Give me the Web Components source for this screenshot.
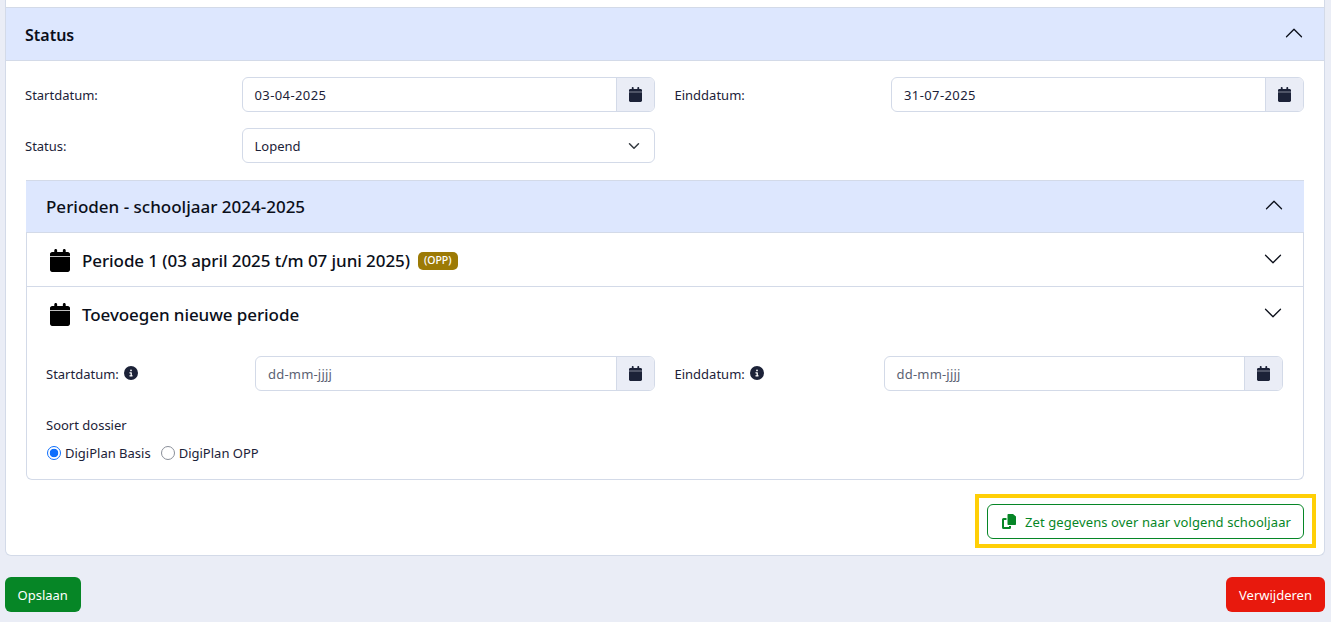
<!DOCTYPE html>
<html lang="nl">
<head>
<meta charset="utf-8">
<title>Status</title>
<style>
    html, body { height: 100%; }
    body {
        margin: 0;
        height: 622px;
        overflow: hidden;
        background: #eaedf6;
        color: #1c2238;
        font: 13px/20px "Noto Sans", "Open Sans", sans-serif;
    }
</style>
</head>
<body>
<template id="cal-icon">
    <svg viewBox="0 0 448 512" width="13" height="15" fill="currentColor"><path d="M96 32V64H48C21.5 64 0 85.500 0 112v48H448V112c0-26.500-21.500-48-48-48H352V32c0-17.700-14.300-32-32-32s-32 14.300-32 32V64H160V32c0-17.700-14.300-32-32-32S96 14.300 96 32zM448 178H0V464c0 26.500 21.500 48 48 48H400c26.500 0 48-21.500 48-48V178z"/></svg>
</template>

<status-page>
    <status-card>
        <accordion-head slot="head" big open>Status</accordion-head>
        <form-row>
            <form-field label="Startdatum:"><date-input value="03-04-2025"></date-input></form-field>
            <form-field label="Einddatum:"><date-input value="31-07-2025"></date-input></form-field>
            <form-field label="Status:"><select-box value="Lopend"></select-box></form-field>
        </form-row>
        <period-section>
            <accordion-head slot="head" open>Perioden - schooljaar 2024-2025</accordion-head>
            <period-row title="Periode 1 (03 april 2025 t/m 07 juni 2025)" badge="(OPP)"></period-row>
            <period-row title="Toevoegen nieuwe periode" open>
                <form-row narrow>
                    <form-field label="Startdatum:" info><date-input placeholder="dd-mm-jjjj"></date-input></form-field>
                    <form-field label="Einddatum:" info><date-input placeholder="dd-mm-jjjj"></date-input></form-field>
                </form-row>
                <radio-group label="Soort dossier" options="DigiPlan Basis|DigiPlan OPP"></radio-group>
            </period-row>
        </period-section>
        <copy-button>Zet gegevens over naar volgend schooljaar</copy-button>
    </status-card>
    <action-bar>
        <action-button kind="save">Opslaan</action-button>
        <action-button kind="delete">Verwijderen</action-button>
    </action-bar>
</status-page>

<script>
const calendarIcon = () => document.getElementById('cal-icon').innerHTML;

function shadow(el, html) {
    el.attachShadow({ mode: 'open' });
    el.shadowRoot.innerHTML = html;
}

class StatusPage extends HTMLElement {
    connectedCallback() {
        shadow(this, `
            <style>
                :host { display: block; padding: 0 6px 0 5px; }
            </style>
            <slot></slot>
        `);
    }
}

class StatusCard extends HTMLElement {
    connectedCallback() {
        shadow(this, `
            <style>
                :host {
                    display: block;
                    height: 556px;
                    box-sizing: border-box;
                    padding-top: 7px;
                    background: #fff;
                    border: 1px solid #d3dae8;
                    border-top: 0;
                    border-radius: 0 0 6px 6px;
                }
                .body { padding: 16px 20px 0 19px; }
            </style>
            <slot name="head"></slot>
            <div class="body"><slot></slot></div>
        `);
    }
}

class AccordionHead extends HTMLElement {
    connectedCallback() {
        const big = this.hasAttribute('big');
        shadow(this, `
            <style>
                :host {
                    display: flex;
                    align-items: center;
                    justify-content: space-between;
                    height: ${big ? 54 : 53}px;
                    box-sizing: border-box;
                    padding: 0 20px 0 ${big ? 19 : 20}px;
                    background: #dde7fe;
                    border-top: 1px solid #d3dae8;
                    border-bottom: 1px solid #d3dae8;
                    color: #0b0f1a;
                    font-size: ${big ? 16 : 17}px;
                    font-weight: ${big ? 600 : 500};
                }
                span { margin-top: ${big ? 2 : 0}px; }
                svg { display: block; margin-top: -3px; }
            </style>
            <span><slot></slot></span>
            <svg viewBox="0 0 16 16" width="20" height="20" fill="#0b0f1a"><path transform="rotate(180 8 8)" fill-rule="evenodd" d="M1.646 4.646a.5.5 0 0 1 .708 0L8 10.293l5.646-5.647a.5.5 0 0 1 .708.708l-6 6a.5.5 0 0 1-.708 0l-6-6a.5.5 0 0 1 0-.708z"/></svg>
        `);
    }
}

class FormRow extends HTMLElement {
    connectedCallback() {
        shadow(this, `
            <style>
                :host {
                    display: grid;
                    grid-template-columns: 1fr 1fr;
                    column-gap: 20px;
                    row-gap: 16px;
                    --label-width: ${this.hasAttribute('narrow') ? 209 : 216.5}px;
                }
            </style>
            <slot></slot>
        `);
    }
}

class FormField extends HTMLElement {
    connectedCallback() {
        const info = this.hasAttribute('info') ? `
            <svg viewBox="0 0 512 512" width="14" height="14"><path fill="#1c2238" d="M256 512A256 256 0 1 0 256 0a256 256 0 1 0 0 512zM216 336h24V272H216c-13.300 0-24-10.700-24-24s10.700-24 24-24h48c13.300 0 24 10.700 24 24v88h8c13.300 0 24 10.700 24 24s-10.700 24-24 24H216c-13.300 0-24-10.700-24-24s10.700-24 24-24zm40-208a32 32 0 1 1 0 64 32 32 0 1 1 0-64z"/></svg>` : '';
        shadow(this, `
            <style>
                :host {
                    display: grid;
                    grid-template-columns: var(--label-width) 1fr;
                    align-items: center;
                }
                .label { display: flex; align-items: center; gap: 5px; }
                svg { margin-top: -1px; }
            </style>
            <span class="label">${this.getAttribute('label')}${info}</span>
            <slot></slot>
        `);
    }
}

class DateInput extends HTMLElement {
    connectedCallback() {
        const value = this.getAttribute('value');
        const text = value || this.getAttribute('placeholder');
        shadow(this, `
            <style>
                :host {
                    display: flex;
                    height: 35px;
                    box-sizing: border-box;
                    border: 1px solid #d3dae8;
                    border-radius: 6px;
                    background: #fff;
                    overflow: hidden;
                }
                .text {
                    flex: 1;
                    padding: 0 12px;
                    line-height: 34px;
                    letter-spacing: ${value ? 0.4 : 0.2}px;
                    color: ${value ? '#1c2238' : '#5b6273'};
                }
                .addon {
                    display: flex;
                    align-items: center;
                    justify-content: center;
                    width: 37px;
                    background: #eaedf6;
                    border-left: 1px solid #d3dae8;
                    color: #1c2238;
                }
            </style>
            <span class="text">${text}</span>
            <span class="addon">${calendarIcon()}</span>
        `);
    }
}

class SelectBox extends HTMLElement {
    connectedCallback() {
        shadow(this, `
            <style>
                :host {
                    display: flex;
                    align-items: center;
                    justify-content: space-between;
                    height: 35px;
                    box-sizing: border-box;
                    padding: 0 12px;
                    border: 1px solid #d3dae8;
                    border-radius: 6px;
                }
            </style>
            <span>${this.getAttribute('value')}</span>
            <svg viewBox="0 0 16 16" width="16" height="12"><path fill="none" stroke="#343a40" stroke-width="2" stroke-linecap="round" stroke-linejoin="round" d="M2 5l6 6 6-6"/></svg>
        `);
    }
}

class PeriodSection extends HTMLElement {
    connectedCallback() {
        shadow(this, `
            <style>
                :host { display: block; margin: 17px 0 0 1px; }
                .list {
                    border: 1px solid #d3dae8;
                    border-top: 0;
                    border-radius: 0 0 6px 6px;
                }
            </style>
            <slot name="head"></slot>
            <div class="list"><slot></slot></div>
        `);
    }
}

class PeriodRow extends HTMLElement {
    connectedCallback() {
        const badge = this.getAttribute('badge');
        const open = this.hasAttribute('open');
        shadow(this, `
            <style>
                :host { display: block; }
                :host(:not(:last-child)) { border-bottom: 1px solid #d3dae8; }
                .head {
                    display: flex;
                    align-items: center;
                    height: 53px;
                    box-sizing: border-box;
                    padding: 2px 20px 0 23px;
                    color: #0b0f1a;
                    font-size: 17px;
                    font-weight: 500;
                    letter-spacing: -0.08px;
                }
                .head .cal { display: flex; width: 32px; color: #000; }
                .head .cal svg { width: 20px; height: 23px; }
                .badge {
                    margin-left: 8px;
                    padding: 0 6px;
                    height: 18px;
                    border-radius: 5px;
                    background: #9c7a05;
                    color: #fff;
                    font-size: 10.5px;
                    line-height: 17px;
                    letter-spacing: 0;
                }
                .chev { margin-left: auto; margin-top: -3px; display: block; }
                .content { padding: 16px 20px 16px 19px; }
            </style>
            <div class="head">
                <span class="cal">${calendarIcon()}</span>
                <span>${this.getAttribute('title')}</span>
                ${badge ? `<span class="badge">${badge}</span>` : ''}
                <svg class="chev" viewBox="0 0 16 16" width="20" height="20" fill="#0b0f1a"><path fill-rule="evenodd" d="M1.646 4.646a.5.5 0 0 1 .708 0L8 10.293l5.646-5.647a.5.5 0 0 1 .708.708l-6 6a.5.5 0 0 1-.708 0l-6-6a.5.5 0 0 1 0-.708z"/></svg>
            </div>
            ${open ? '<div class="content"><slot></slot></div>' : ''}
        `);
    }
}

class RadioGroup extends HTMLElement {
    connectedCallback() {
        const options = this.getAttribute('options').split('|');
        shadow(this, `
            <style>
                :host { display: block; margin-top: 24px; }
                .options { display: flex; gap: 10px; margin-top: 8px; }
                label { display: flex; align-items: center; gap: 4px; }
                input {
                    appearance: none;
                    box-sizing: border-box;
                    width: 14px;
                    height: 14px;
                    margin: 0 0 0 1px;
                    border: 1px solid #8a8f99;
                    border-radius: 50%;
                    background: #fff;
                }
                input:checked {
                    border-color: #0d6efd;
                    background: radial-gradient(circle, #0d6efd 0 4px, #fff 4.6px);
                }
                label + label input { margin-left: 0; }
            </style>
            <div>${this.getAttribute('label')}</div>
            <div class="options">
                ${options.map((o, i) => `<label><input type="radio" name="soort" ${i === 0 ? 'checked' : ''}><span>${o}</span></label>`).join('')}
            </div>
        `);
    }
}

class CopyButton extends HTMLElement {
    connectedCallback() {
        shadow(this, `
            <style>
                :host { display: flex; justify-content: flex-end; margin-top: 24px; }
                .btn {
                    position: relative;
                    display: flex;
                    align-items: center;
                    gap: 9px;
                    width: 317px;
                    height: 35px;
                    box-sizing: border-box;
                    padding: 0 12px 0 14px;
                    border: 1px solid #068626;
                    border-radius: 6px;
                    color: #068626;
                    letter-spacing: 0.1px;
                    white-space: nowrap;
                }
                .mark {
                    position: absolute;
                    inset: -11px -13px -10px -13px;
                    border: 4px solid #ffcf06;
                    pointer-events: none;
                }
                svg { flex: none; }
            </style>
            <div class="btn">
                <svg viewBox="0 0 14 15" width="14" height="15"><path fill="#068626" d="M5.500 1c0-.6.4-1 1-1H11l3 2.500V10c0 .6-.4 1-1 1H6.500c-.6 0-1-.4-1-1z"/><path fill="none" stroke="#068626" stroke-width="2" d="M4.500 5H1.500c-.3 0-.5.2-.5.5V13.500c0 .3.2.5.5.5H7.500c.3 0 .5-.2.5-.5V12"/></svg>
                <span><slot></slot></span>
                <span class="mark"></span>
            </div>
        `);
    }
}

class ActionBar extends HTMLElement {
    connectedCallback() {
        shadow(this, `
            <style>
                :host { display: flex; justify-content: space-between; margin-top: 21px; }
            </style>
            <slot></slot>
        `);
    }
}

class ActionButton extends HTMLElement {
    connectedCallback() {
        const isDelete = this.getAttribute('kind') === 'delete';
        shadow(this, `
            <style>
                :host {
                    display: block;
                    height: 35px;
                    box-sizing: border-box;
                    padding: 0 13px 0 ${isDelete ? 13 : 12.5}px;
                    border-radius: 6px;
                    background: ${isDelete ? '#e8190d' : '#068626'};
                    color: #fff;
                    line-height: 36px;
                }
            </style>
            <slot></slot>
        `);
    }
}

customElements.define('status-page', StatusPage);
customElements.define('status-card', StatusCard);
customElements.define('accordion-head', AccordionHead);
customElements.define('form-row', FormRow);
customElements.define('form-field', FormField);
customElements.define('date-input', DateInput);
customElements.define('select-box', SelectBox);
customElements.define('period-section', PeriodSection);
customElements.define('period-row', PeriodRow);
customElements.define('radio-group', RadioGroup);
customElements.define('copy-button', CopyButton);
customElements.define('action-bar', ActionBar);
customElements.define('action-button', ActionButton);
</script>
</body>
</html>
